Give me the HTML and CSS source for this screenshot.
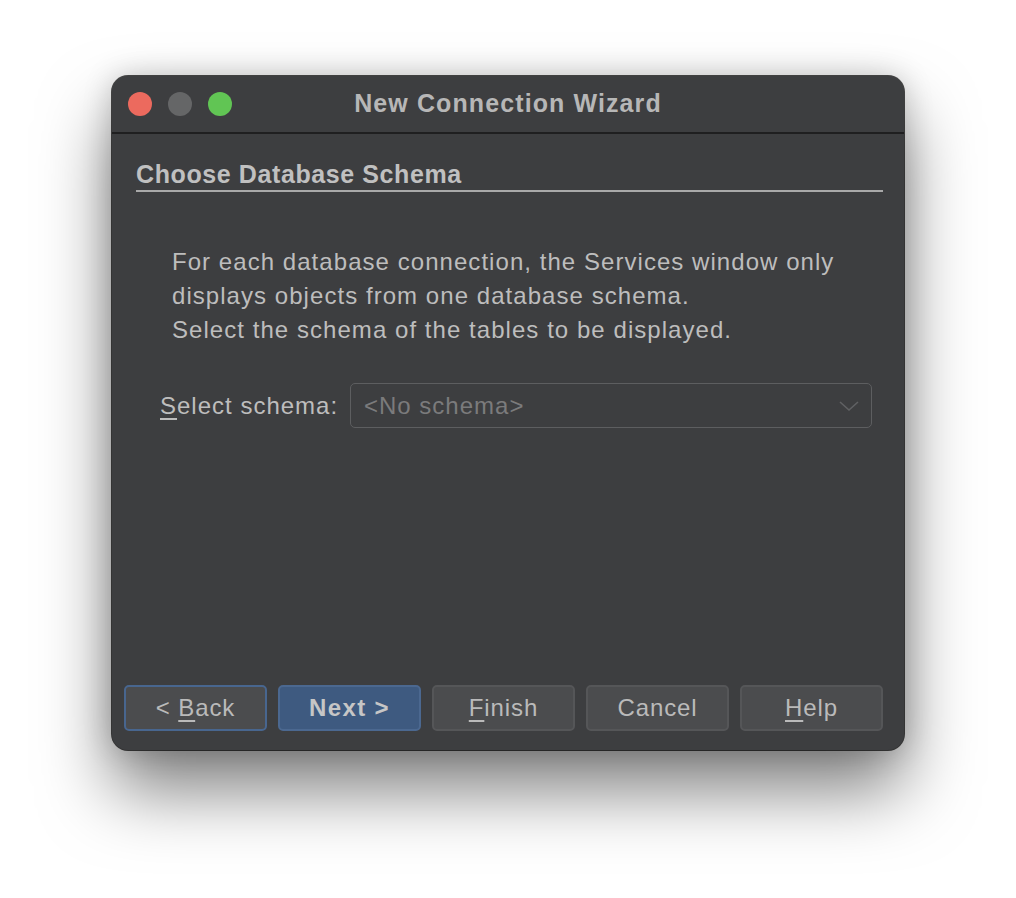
FILE: index.html
```html
<!DOCTYPE html>
<html>
    <head>
    <title>New Connection Wizard</title>
    <link rel="stylesheet" href="styles.css">
    </head>
    <body>
    <div id="desktop">
    <div id="window">
        <div id="titlebar">
            <div class="lights">
                <span class="light close"></span>
                <span class="light min"></span>
                <span class="light zoom"></span>
            </div>
            <div class="title">New Connection Wizard</div>
            <div></div>
        </div>
        <div id="body">
            <div class="heading">Choose Database Schema</div>
            <p class="info">For each database connection, the Services window only<br>
            displays objects from one database schema.<br>
            Select the schema of the tables to be displayed.</p>
            <div class="row">
                <label for="schema"><u>S</u>elect schema:</label>
                <div class="combo" id="schema">
                    <span>&lt;No schema&gt;</span>
                    <svg width="20" height="12" viewBox="0 0 20 12">
                        <path d="M1 2 L10 10 L19 2" fill="none" stroke="#606163" stroke-width="1.6"/>
                    </svg>
                </div>
            </div>
            <div class="spacer"></div>
            <div class="buttons">
                <button class="btn focus">&lt; <u>B</u>ack</button>
                <button class="btn default">Next &gt;</button>
                <button class="btn"><u>F</u>inish</button>
                <button class="btn">Cancel</button>
                <button class="btn"><u>H</u>elp</button>
            </div>
        </div>
    </div>
    </div>
    </body>
</html>
```

FILE: styles.css
```css
body {
    margin: 0;
    background-color: #ffffff;
    font-family: "Liberation Sans", Arial, sans-serif;
}
#desktop {
    padding: 76px 0 0 112px;
    height: 822px;
}
#window {
    width: 792px;
    height: 674px;
    background-color: #3d3e40;
    border-radius: 16px;
    display: flex;
    flex-direction: column;
    box-shadow: 0 0 0 1px rgba(0, 0, 0, 0.7),
        0 40px 70px rgba(0, 0, 0, 0.5),
        0 0 30px rgba(0, 0, 0, 0.2);
}
#titlebar {
    height: 56px;
    border-bottom: 2px solid #1f1f20;
    display: grid;
    grid-template-columns: 1fr auto 1fr;
    align-items: center;
}
.lights {
    display: flex;
    gap: 16px;
    padding-left: 16px;
}
.light {
    width: 24px;
    height: 24px;
    border-radius: 50%;
}
.close { background-color: #ec6a5e; }
.min { background-color: #656667; }
.zoom { background-color: #61c554; }
.title {
    color: #b7b7b7;
    font-size: 25px;
    font-weight: bold;
    letter-spacing: 1.1px;
    margin-top: -2px;
}
#body {
    flex: 1;
    display: flex;
    flex-direction: column;
    padding: 26px 21px 19px 12px;
}
.heading {
    margin-left: 12px;
    color: #c0c0c0;
    font-size: 25px;
    font-weight: bold;
    letter-spacing: 0.6px;
    line-height: 28px;
    padding-bottom: 2px;
    border-bottom: 2px solid #a9a9a9;
}
.info {
    margin: 53px 0 0 48px;
    color: #bdbdbd;
    font-size: 24px;
    letter-spacing: 1.05px;
    line-height: 34px;
}
.row {
    display: flex;
    align-items: center;
    margin: 36px 11px 0 36px;
}
.row label {
    color: #bdbdbd;
    font-size: 24px;
    letter-spacing: 1px;
    width: 190px;
}
.row u {
    text-decoration-thickness: 2px;
    text-underline-offset: 4px;
}
.combo {
    flex: 1;
    height: 43px;
    border: 1px solid #5d5e60;
    border-radius: 5px;
    display: flex;
    align-items: center;
    justify-content: space-between;
    padding: 0 12px 0 13px;
    color: #7b7b7c;
    font-size: 24px;
    letter-spacing: 1px;
}
.spacer {
    flex: 1;
}
.buttons {
    display: flex;
    gap: 11px;
}
.btn {
    width: 143px;
    height: 46px;
    border-radius: 5px;
    border: 2px solid #555658;
    background-color: #4b4c4e;
    color: #bababa;
    font-family: "Liberation Sans", Arial, sans-serif;
    font-size: 24px;
    letter-spacing: 0.9px;
    padding: 0;
}
.btn u {
    text-decoration-thickness: 2px;
    text-underline-offset: 4px;
}
.btn.focus {
    border-color: #48668f;
}
.btn.default {
    background-color: #3e5a80;
    border-color: #4b6890;
    color: #c6c6c6;
    font-weight: bold;
    letter-spacing: 1.4px;
}
```
